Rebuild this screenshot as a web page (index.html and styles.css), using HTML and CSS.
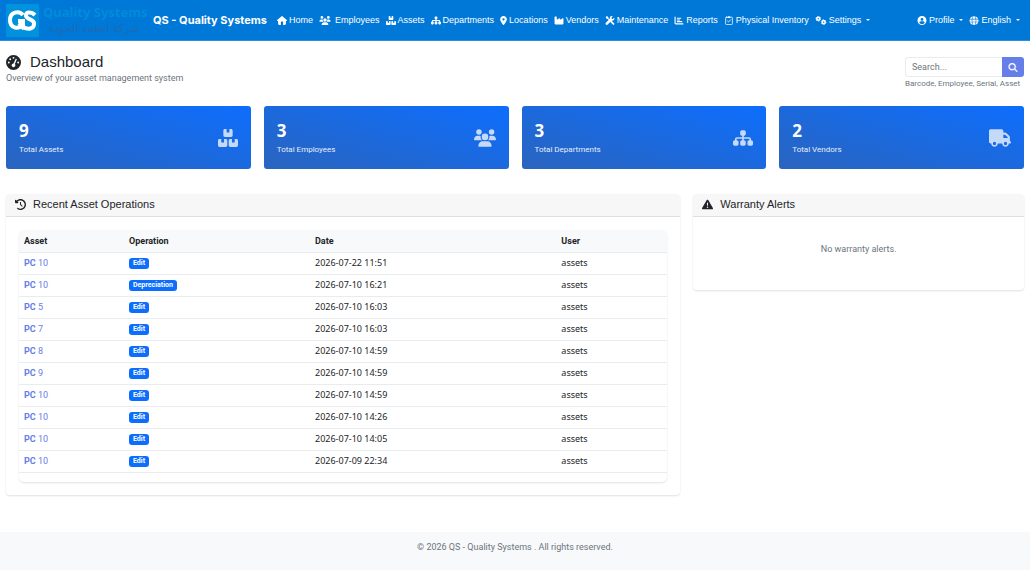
FILE: index.html
```html
<!DOCTYPE html>
<html lang="en">
<head>
  <meta charset="UTF-8">
  <meta name="viewport" content="width=device-width, initial-scale=1.0">
  <title>Dashboard | QS - Quality Systems</title>
  <link rel="stylesheet" href="styles.css">
</head>
<body>
  <svg class="sprite" aria-hidden="true">
    <symbol id="house" viewBox="0 0 576 512"><path d="M575.8 255.5c0 18-15 32.1-32 32.1h-32l.7 160.2c.2 35.5-28.5 64.3-64 64.3H352V352c0-17.7-14.3-32-32-32H256c-17.7 0-32 14.3-32 32V512H128.1c-35.3 0-64-28.7-64-64V287.6H32c-18 0-32-14-32-32.1c0-9 3-17 10-24L266.4 8c7-7 15-8 22-8s15 2 21 7L564.8 231.5c8 7 12 15 11 24z"/></symbol>
    <symbol id="users" viewBox="0 0 640 512"><path d="M144 0a80 80 0 1 1 0 160A80 80 0 1 1 144 0zM512 0a80 80 0 1 1 0 160A80 80 0 1 1 512 0zM0 298.7C0 239.8 47.8 192 106.7 192h42.7c15.9 0 31 3.5 44.6 9.7c-1.3 7.2-1.9 14.7-1.9 22.3c0 38.2 16.8 72.5 43.3 96H21.3C9.6 320 0 310.4 0 298.7zM405.3 320c26.6-23.5 43.3-57.8 43.3-96c0-7.6-.7-15-1.9-22.3c13.6-6.3 28.7-9.7 44.6-9.7h42.7C592.2 192 640 239.8 640 298.7c0 11.8-9.6 21.3-21.3 21.3H405.3zM224 224a96 96 0 1 1 192 0 96 96 0 1 1 -192 0zM128 485.3C128 411.7 187.7 352 261.3 352H378.7C452.3 352 512 411.7 512 485.3c0 14.7-11.9 26.7-26.7 26.7H154.7c-14.7 0-26.7-11.9-26.7-26.7z"/></symbol>
    <symbol id="boxes" viewBox="0 0 576 512"><path d="M248 0v80c0 9 7 16 16 16h48c9 0 16-7 16-16V0h48c26 0 46 20 46 46v132c0 26-20 46-46 46H200c-26 0-46-20-46-46V46c0-26 20-46 46-46zM94 288v80c0 9 7 16 16 16h48c9 0 16-7 16-16v-80h48c26 0 46 20 46 46v132c0 26-20 46-46 46H46c-26 0-46-20-46-46V334c0-26 20-46 46-46zM402 288v80c0 9 7 16 16 16h48c9 0 16-7 16-16v-80h48c26 0 46 20 46 46v132c0 26-20 46-46 46H354c-26 0-46-20-46-46V334c0-26 20-46 46-46z"/></symbol>
    <symbol id="sitemap" viewBox="0 0 576 512"><path d="M208 80c0-26.5 21.5-48 48-48h64c26.5 0 48 21.5 48 48v64c0 26.5-21.5 48-48 48h-8v40H464c30.9 0 56 25.1 56 56v32h8c26.5 0 48 21.5 48 48v64c0 26.5-21.5 48-48 48H464c-26.5 0-48-21.5-48-48V368c0-26.5 21.5-48 48-48h8V288c0-4.4-3.6-8-8-8H312v40h8c26.5 0 48 21.5 48 48v64c0 26.5-21.5 48-48 48H256c-26.5 0-48-21.5-48-48V368c0-26.5 21.5-48 48-48h8V280H112c-4.4 0-8 3.6-8 8v32h8c26.5 0 48 21.5 48 48v64c0 26.5-21.5 48-48 48H48c-26.5 0-48-21.5-48-48V368c0-26.5 21.5-48 48-48h8V288c0-30.9 25.1-56 56-56H264V192h-8c-26.5 0-48-21.5-48-48V80z"/></symbol>
    <symbol id="location" viewBox="0 0 384 512"><path d="M215.7 499.2C267 435 384 279.4 384 192C384 86 298 0 192 0S0 86 0 192c0 87.4 117 243 168.3 307.2c12.3 15.3 35.1 15.3 47.4 0zM192 128a64 64 0 1 1 0 128 64 64 0 1 1 0-128z"/></symbol>
    <symbol id="industry" viewBox="0 0 576 512"><path d="M64 32C46.3 32 32 46.3 32 64V432c0 26.5 21.5 48 48 48H496c26.5 0 48-21.5 48-48V152.2c0-18.2-19.4-29.7-35.4-21.1L352 215.4V152.2c0-18.2-19.4-29.7-35.4-21.1L160 215.4V64c0-17.7-14.3-32-32-32H64z"/></symbol>
    <symbol id="tools" viewBox="0 0 512 512"><path d="M78 5L5 78l55 78 62 12 92 92 46-46-92-92-12-62zM345 270l-75 75 145 145c20 20 55 20 75 0s20-55 0-75zM507 120c-4-14-20-16-28-6l-62 62-64-16-16-64 62-62c10-10 6-25-8-28-72-17-151 34-151 116 0 12 2 27 6 39L22 385c-29 29-29 76 0 105s76 29 105 0l212-224c94 31 191-51 168-146z"/></symbol>
    <symbol id="chart" viewBox="0 0 512 512"><path d="M32 32c17.7 0 32 14.3 32 32V400c0 8.8 7.2 16 16 16H480c17.7 0 32 14.3 32 32s-14.3 32-32 32H80c-44.2 0-80-35.8-80-80V64C0 46.3 14.3 32 32 32zm96 96c0-17.7 14.3-32 32-32l192 0c17.7 0 32 14.3 32 32s-14.3 32-32 32l-192 0c-17.7 0-32-14.3-32-32zm32 64H288c17.7 0 32 14.3 32 32s-14.3 32-32 32H160c-17.7 0-32-14.3-32-32s14.3-32 32-32zm0 96H416c17.7 0 32 14.3 32 32s-14.3 32-32 32H160c-17.7 0-32-14.3-32-32s14.3-32 32-32z"/></symbol>
    <symbol id="clipboard" viewBox="0 0 448 512"><g fill="none" stroke="currentColor" stroke-width="44" stroke-linecap="round" stroke-linejoin="round"><rect x="32" y="66" width="384" height="422" rx="45"/><path d="M140 280l60 60 110-125"/></g><path d="M140 110V55h35c10-70 88-70 98 0h35v55z"/></symbol>
    <symbol id="gears" viewBox="0 0 640 512"><g fill="none" stroke="currentColor"><circle cx="165" cy="155" r="85" stroke-width="90"/><circle cx="165" cy="155" r="138" stroke-width="44" stroke-dasharray="72"/><circle cx="470" cy="350" r="85" stroke-width="90"/><circle cx="470" cy="350" r="138" stroke-width="44" stroke-dasharray="72"/></g></symbol>
    <symbol id="user" viewBox="0 0 512 512"><path fill-rule="evenodd" d="M256 0a256 256 0 1 0 0 512 256 256 0 1 0 0-512zM256 112a80 80 0 1 1 0 160 80 80 0 1 1 0-160zM96 386c24-48 65-82 120-82h80c55 0 96 34 120 82-80 103-240 103-320 0z"/></symbol>
    <symbol id="globe" viewBox="0 0 512 512"><path fill-rule="evenodd" d="M352 256c0 22-1 44-3 64H163c-4-42-4-86 0-128h186c2 20 3 42 3 64zM381 192h123c10 42 10 86 0 128H381c4-42 4-86 0-128zM494 160H377c-10-64-30-117-55-151 78 20 142 77 172 151zM345 160H167C187 47 223 0 256 0s69 47 89 160zM135 160H18C48 86 112 29 190 9c-25 34-45 87-55 151zM8 192h123c-4 42-4 86 0 128H8c-10-42-10-86 0-128zM167 352h178c-20 113-56 160-89 160s-69-47-89-160zM135 352c10 64 30 117 55 151-78-20-142-77-172-151zM494 352c-30 74-94 131-172 151 25-34 45-87 55-151z"/></symbol>
    <symbol id="search" viewBox="0 0 512 512"><path stroke="currentColor" stroke-width="16" d="M416 208c0 45.9-14.9 88.3-40 122.7L502.6 457.4c12.5 12.5 12.5 32.8 0 45.3s-32.8 12.5-45.3 0L330.7 376c-34.4 25.2-76.8 40-122.7 40C93.1 416 0 322.9 0 208S93.1 0 208 0S416 93.1 416 208zM208 352a144 144 0 1 0 0-288 144 144 0 1 0 0 288z"/></symbol>
    <symbol id="gauge" viewBox="0 0 512 512"><path d="M0 256a256 256 0 1 1 512 0A256 256 0 1 1 0 256zM288 96a32 32 0 1 0 -64 0 32 32 0 1 0 64 0zM256 416c35.3 0 64-28.7 64-64c0-17.4-6.9-33.1-18.1-44.6L366 161.7c5.3-12.1-.2-26.3-12.3-31.6s-26.3 .2-31.6 12.3L257.9 288c-35.9 0-65.9 28.7-65.9 64s28.7 64 64 64zM176 144a32 32 0 1 0 -64 0 32 32 0 1 0 64 0zM96 288a32 32 0 1 0 0-64 32 32 0 1 0 0 64zm352-32a32 32 0 1 0 -64 0 32 32 0 1 0 64 0z"/></symbol>
    <symbol id="history" viewBox="0 0 512 512"><path d="M75 75L41 41C25.9 25.9 0 36.6 0 57.9V168c0 13.3 10.7 24 24 24H134.1c21.4 0 32.1-25.9 17-41l-30.8-30.8C155 85.5 203 64 256 64c106 0 192 86 192 192s-86 192-192 192c-40.8 0-78.6-12.7-109.7-34.4c-14.5-10.1-34.4-6.6-44.6 7.9s-6.6 34.4 7.9 44.6C151.2 495 201.7 512 256 512c141.4 0 256-114.6 256-256S397.4 0 256 0C185.3 0 121.3 28.7 75 75zm181 53c-13.3 0-24 10.7-24 24V256c0 6.4 2.5 12.5 7 17l72 72c9.4 9.4 24.6 9.4 33.9 0s9.4-24.6 0-33.9l-65-65V152c0-13.3-10.7-24-24-24z"/></symbol>
    <symbol id="warning" viewBox="0 0 512 512"><path d="M256 32c14.2 0 27.3 7.5 34.5 19.8l216 368c7.3 12.4 7.3 27.7 .2 40.1S486.3 480 472 480H40c-14.3 0-27.6-7.7-34.7-20.1s-7-27.8 .2-40.1l216-368C228.7 39.5 241.8 32 256 32zm0 128c-13.3 0-24 10.7-24 24V296c0 13.3 10.7 24 24 24s24-10.7 24-24V184c0-13.3-10.7-24-24-24zm32 224a32 32 0 1 0 -64 0 32 32 0 1 0 64 0z"/></symbol>
    <symbol id="truck" viewBox="0 0 640 512"><path d="M48 0C21.5 0 0 21.5 0 48V368c0 26.5 21.5 48 48 48H64c0 53 43 96 96 96s96-43 96-96H384c0 53 43 96 96 96s96-43 96-96h32c17.7 0 32-14.3 32-32s-14.3-32-32-32V237.3c0-17-6.7-33.3-18.7-45.3L512 114.7c-12-12-28.3-18.7-45.3-18.7H416V48c0-26.5-21.5-48-48-48H48zM416 160h50.7L544 237.3V256H416V160zM112 416a48 48 0 1 1 96 0 48 48 0 1 1 -96 0zm368-48a48 48 0 1 1 0 96 48 48 0 1 1 0-96z"/></symbol>
  </svg>

  <nav class="navbar">
    <a class="brand" href="#">
      <svg class="brand-mark" viewBox="0 0 33 33" aria-hidden="true">
        <rect width="33" height="33" rx="1" fill="#0092dc"/>
        <g fill="none" stroke="#fff" stroke-width="4">
          <path d="M17 11C13 6 4 8 4 16c0 8 8 10 13 5V17h-5M13 19l5 6"/>
          <path d="M29 11c-4-4-10-3-9 1 1 4 9 3 8 8 0 5-6 6-11 3"/>
        </g>
      </svg>
      <span class="brand-logo">
        <span class="brand-en">Quality Systems</span>
        <span class="brand-ar" lang="ar" dir="rtl">شركة أنظمة الجودة</span>
      </span>
      <span class="brand-name">QS - Quality Systems</span>
    </a>
    <ul class="nav-list">
      <li><a href="#"><svg class="icon"><use href="#house"/></svg>Home</a></li>
      <li><a class="spaced" href="#"><svg class="icon wide"><use href="#users"/></svg>Employees</a></li>
      <li><a href="#"><svg class="icon"><use href="#boxes"/></svg>Assets</a></li>
      <li><a href="#"><svg class="icon"><use href="#sitemap"/></svg>Departments</a></li>
      <li><a href="#"><svg class="icon narrow"><use href="#location"/></svg>Locations</a></li>
      <li><a href="#"><svg class="icon"><use href="#industry"/></svg>Vendors</a></li>
      <li><a href="#"><svg class="icon"><use href="#tools"/></svg>Maintenance</a></li>
      <li><a href="#"><svg class="icon"><use href="#chart"/></svg>Reports</a></li>
      <li><a href="#"><svg class="icon"><use href="#clipboard"/></svg>Physical Inventory</a></li>
      <li><a class="dropdown" href="#"><svg class="icon wide"><use href="#gears"/></svg>Settings</a></li>
    </ul>
    <ul class="nav-list nav-right">
      <li><a class="dropdown" href="#"><svg class="icon"><use href="#user"/></svg>Profile</a></li>
      <li><a class="dropdown" href="#"><svg class="icon"><use href="#globe"/></svg>English</a></li>
    </ul>
  </nav>

  <main class="container">
    <header class="page-header">
      <div>
        <h1><svg class="icon"><use href="#gauge"/></svg>Dashboard</h1>
        <p class="subtitle">Overview of your asset management system</p>
      </div>
      <form class="search">
        <div class="search-group">
          <input type="text" id="search-box" placeholder="Search..." aria-label="Search">
          <button type="submit" aria-label="Search"><svg class="icon"><use href="#search"/></svg></button>
        </div>
        <label for="search-box">Barcode, Employee, Serial, Asset</label>
      </form>
    </header>

    <section class="stats">
      <div class="stat-card">
        <div><div class="stat-value">9</div><div class="stat-label">Total Assets</div></div>
        <svg class="icon"><use href="#boxes"/></svg>
      </div>
      <div class="stat-card">
        <div><div class="stat-value">3</div><div class="stat-label">Total Employees</div></div>
        <svg class="icon wide"><use href="#users"/></svg>
      </div>
      <div class="stat-card">
        <div><div class="stat-value">3</div><div class="stat-label">Total Departments</div></div>
        <svg class="icon"><use href="#sitemap"/></svg>
      </div>
      <div class="stat-card">
        <div><div class="stat-value">2</div><div class="stat-label">Total Vendors</div></div>
        <svg class="icon wide"><use href="#truck"/></svg>
      </div>
    </section>

    <section class="panels">
      <div class="card operations">
        <h2 class="card-header"><svg class="icon"><use href="#history"/></svg>Recent Asset Operations</h2>
        <div class="card-body">
          <div class="table-wrap">
            <table>
              <thead>
                <tr><th class="col-asset">Asset</th><th class="col-operation">Operation</th><th class="col-date">Date</th><th>User</th></tr>
              </thead>
              <tbody>
                <tr><td><a href="#"><b>PC</b> 10</a></td><td><span class="badge">Edit</span></td><td>2026-07-22 11:51</td><td>assets</td></tr>
                <tr><td><a href="#"><b>PC</b> 10</a></td><td><span class="badge">Depreciation</span></td><td>2026-07-10 16:21</td><td>assets</td></tr>
                <tr><td><a href="#"><b>PC</b> 5</a></td><td><span class="badge">Edit</span></td><td>2026-07-10 16:03</td><td>assets</td></tr>
                <tr><td><a href="#"><b>PC</b> 7</a></td><td><span class="badge">Edit</span></td><td>2026-07-10 16:03</td><td>assets</td></tr>
                <tr><td><a href="#"><b>PC</b> 8</a></td><td><span class="badge">Edit</span></td><td>2026-07-10 14:59</td><td>assets</td></tr>
                <tr><td><a href="#"><b>PC</b> 9</a></td><td><span class="badge">Edit</span></td><td>2026-07-10 14:59</td><td>assets</td></tr>
                <tr><td><a href="#"><b>PC</b> 10</a></td><td><span class="badge">Edit</span></td><td>2026-07-10 14:59</td><td>assets</td></tr>
                <tr><td><a href="#"><b>PC</b> 10</a></td><td><span class="badge">Edit</span></td><td>2026-07-10 14:26</td><td>assets</td></tr>
                <tr><td><a href="#"><b>PC</b> 10</a></td><td><span class="badge">Edit</span></td><td>2026-07-10 14:05</td><td>assets</td></tr>
                <tr><td><a href="#"><b>PC</b> 10</a></td><td><span class="badge">Edit</span></td><td>2026-07-09 22:34</td><td>assets</td></tr>
              </tbody>
            </table>
          </div>
        </div>
      </div>
      <div class="card warranty">
        <h2 class="card-header"><svg class="icon"><use href="#warning"/></svg>Warranty Alerts</h2>
        <p class="empty">No warranty alerts.</p>
      </div>
    </section>
  </main>

  <footer class="footer">© 2026 QS - Quality Systems . All rights reserved.</footer>
</body>
</html>
```
FILE: styles.css
```css
* {
  box-sizing: border-box;
}

body {
  margin: 0;
  font-family: Roboto, sans-serif;
  font-size: 9px;
  line-height: 12px;
  color: #212529;
  background: #fff;
}

a {
  text-decoration: none;
}

.sprite {
  display: none;
}

.icon {
  width: 10px;
  height: 9px;
  fill: currentColor;
  flex: none;
}

/* Navbar */
.navbar {
  display: flex;
  align-items: center;
  height: 41px;
  padding: 0 6px;
  background: #0078d7;
  border-bottom: 1px solid #2b8fdf;
}

.brand {
  display: flex;
  align-items: center;
  color: #fff;
  white-space: nowrap;
}

.brand-mark {
  width: 33px;
  height: 33px;
}

.brand-logo {
  display: flex;
  flex-direction: column;
  width: 102px;
  margin: 0 8px 0 4px;
}

.brand-en {
  font: bold 13px/17px "Noto Sans", sans-serif;
  color: #008cda;
}

.brand-ar {
  font: 11px/16px "DejaVu Sans", sans-serif;
  color: #1b6cb4;
  text-align: center;
}

.brand-name {
  font-family: Inter, sans-serif;
  font-size: 11px;
  font-weight: 700;
}

.nav-list {
  display: flex;
  gap: 6px;
  margin: 0 0 0 10px;
  padding: 0;
  list-style: none;
  font-family: "Liberation Sans", Arial, sans-serif;
  font-size: 9px;
  white-space: nowrap;
}

.nav-list a {
  display: flex;
  align-items: center;
  gap: 2px;
  color: #fff;
}

.nav-list .narrow {
  width: 7px;
}

.nav-list .wide {
  width: 12px;
}

.nav-list .spaced {
  gap: 4px;
}

.nav-right {
  margin-left: auto;
  padding-right: 4px;
}

.dropdown::after {
  content: "";
  margin-left: 3px;
  border: 2px solid transparent;
  border-top-color: #fff;
  border-bottom: 0;
}

/* Page header */
.container {
  padding: 12px 6px 0;
}

.page-header {
  display: flex;
  justify-content: space-between;
}

h1 {
  display: flex;
  align-items: center;
  gap: 9px;
  margin: 0;
  font: 15px/18px "Liberation Sans", Arial, sans-serif;
}

h1 .icon {
  width: 15px;
  height: 15px;
}

.subtitle {
  margin: 1px 0 0;
  color: #6c757d;
}

.search {
  width: 119px;
  padding-top: 4px;
}

.search-group {
  display: flex;
  height: 20px;
  margin-bottom: 2px;
}

.search input {
  flex: 1;
  min-width: 0;
  padding: 0 6px;
  border: 1px solid #e9ecef;
  border-right: 0;
  border-radius: 3px 0 0 3px;
  font: inherit;
}

.search input::placeholder {
  color: #6c757d;
}

.search button {
  display: flex;
  align-items: center;
  justify-content: center;
  width: 22px;
  padding: 0;
  border: 0;
  border-radius: 0 3px 3px 0;
  background: #667eea;
  color: #fff;
}

.search label {
  display: block;
  font-size: 8px;
  line-height: 10px;
  color: #6c757d;
  white-space: nowrap;
}

/* Stat cards */
.stats {
  display: grid;
  grid-template-columns: repeat(4, 1fr);
  gap: 13px;
  margin-top: 17px;
}

.stat-card {
  display: flex;
  align-items: center;
  justify-content: space-between;
  padding: 13px;
  border-radius: 3px;
  background: linear-gradient(to top right, #2a64be, #0d6efd);
  color: #fff;
}

.stat-value {
  font: bold 17px/24px "Noto Sans", sans-serif;
}

.stat-label {
  font-size: 8px;
  line-height: 13px;
  opacity: .9;
}

.stat-card .icon {
  width: 20px;
  height: 18px;
  opacity: .75;
}

.stat-card .wide {
  width: 22px;
}

/* Panels */
.panels {
  display: grid;
  grid-template-columns: repeat(12, 1fr);
  gap: 13px;
  align-items: start;
  margin-top: 25px;
}

.card {
  border-radius: 4px;
  background: #fff;
  box-shadow: 0 1px 2px rgba(0, 0, 0, .12);
}

.operations {
  grid-column: span 8;
}

.warranty {
  grid-column: span 4;
}

.card-header {
  display: flex;
  align-items: center;
  gap: 7px;
  height: 23px;
  margin: 0;
  padding: 0 9px 2px;
  border-bottom: 1px solid #dfdfdf;
  border-radius: 4px 4px 0 0;
  background: #f7f7f7;
  font: 11px/14px "Liberation Sans", Arial, sans-serif;
}

.card-header .icon {
  width: 11px;
  height: 11px;
}

.card-body {
  padding: 13px;
}

.table-wrap {
  padding-bottom: 9px;
  border-radius: 5px;
  overflow: hidden;
  box-shadow: 0 1px 2px rgba(0, 0, 0, .12);
}

table {
  width: 100%;
  table-layout: fixed;
  border-collapse: collapse;
}

th,
td {
  height: 22px;
  padding: 0 5px;
  border-bottom: 1px solid #e9ecef;
  text-align: left;
}

th {
  background: #f8f9fa;
  font-weight: 700;
}

td {
  font-family: "Noto Sans", sans-serif;
}

td a {
  font-family: Roboto, sans-serif;
  color: #667eea;
}

.col-asset {
  width: 105px;
}

.col-operation {
  width: 186px;
}

.col-date {
  width: 38%;
}

.badge {
  display: inline-block;
  padding: 0 4px;
  border-radius: 3px;
  background: #0d6efd;
  color: #fff;
  font: bold 7px/11px Roboto, sans-serif;
  vertical-align: middle;
}

.empty {
  margin: 0;
  padding: 26px 13px 35px;
  text-align: center;
  color: #6c757d;
}

/* Footer */
.footer {
  height: 38px;
  margin-top: 37px;
  padding-top: 9px;
  background: #f8f9fa;
  color: #6c757d;
  text-align: center;
}
```
